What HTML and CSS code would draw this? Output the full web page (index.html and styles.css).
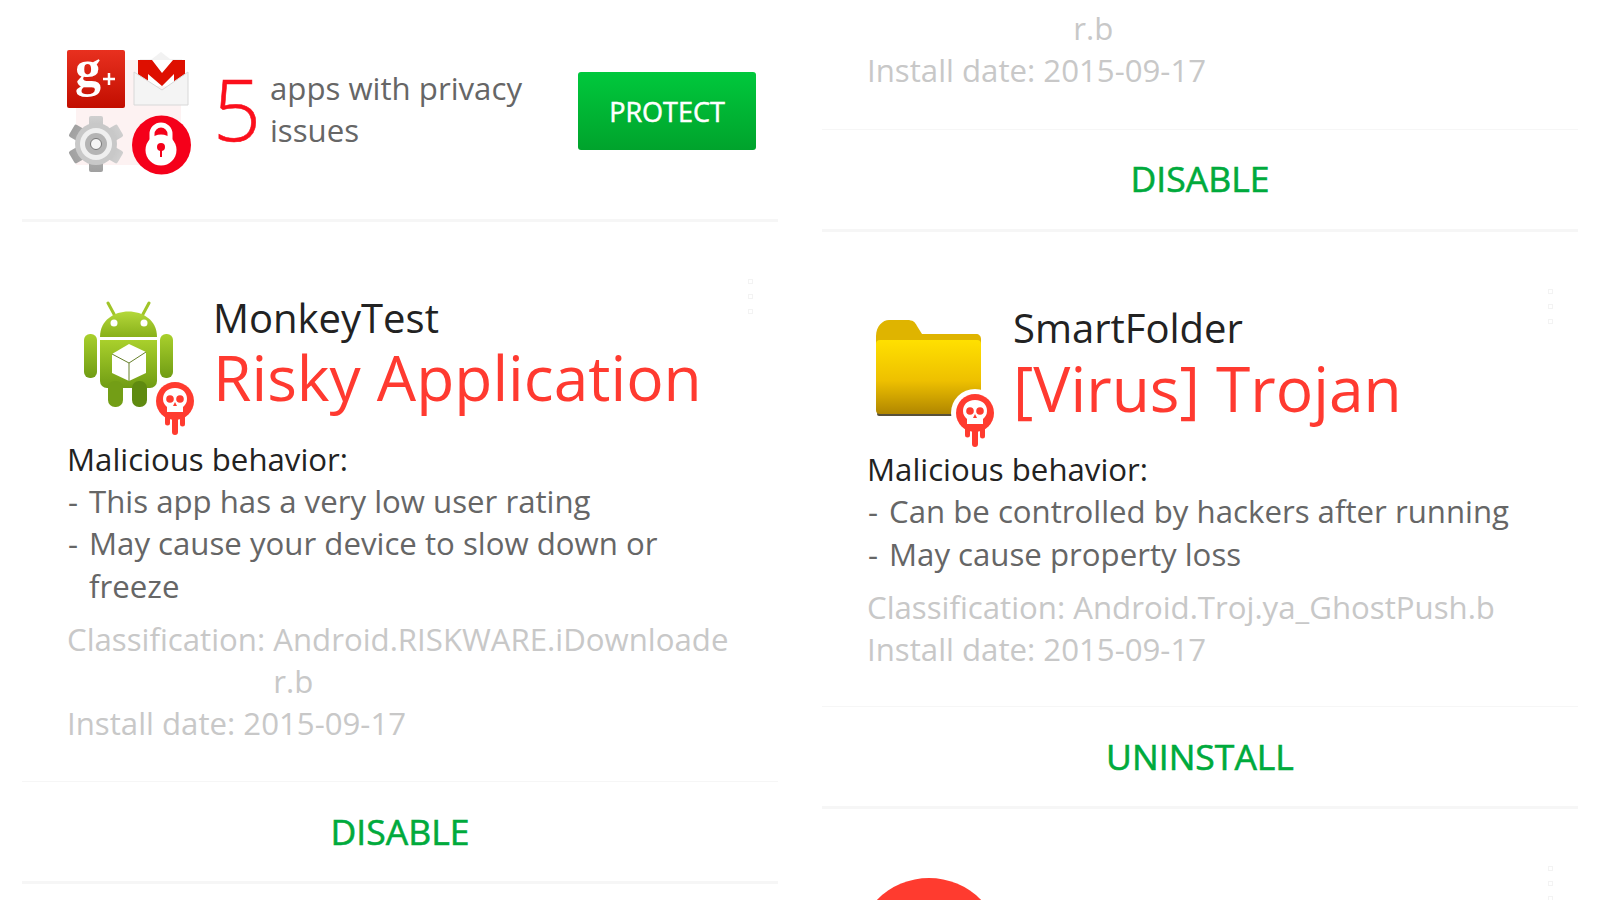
FILE: index.html
```html
<!DOCTYPE html>
<html lang="en">
<head>
<meta charset="utf-8">
<title>Privacy issues</title>
<link rel="stylesheet" href="styles.css">
</head>
<body>
<main class="page">
  <section class="col col-left">
    <header class="summary">
      <div class="app-grid">
        <svg class="mini" viewBox="0 0 58 58"><defs><linearGradient id="gp" x1="0" y1="0" x2="0" y2="1"><stop offset="0" stop-color="#e8301f"/><stop offset="1" stop-color="#c20e00"/></linearGradient></defs><rect width="58" height="58" rx="2" fill="url(#gp)"/><text x="8" y="36" class="gplus">g</text><path d="M42 23v12M36 29h12" stroke="#fff" stroke-width="2.500"/></svg>
        <svg class="mini" viewBox="0 0 58 58"><path d="M29 2 20 9H8v13h42V9H38z" fill="#f2f2f2"/><path d="M6 10h47v26H6z" fill="#fff"/><path d="M6 10h14l10 13 11-13h12v25h-11V24L30 36 16 24v11H6z" fill="#de0f00"/><path d="M2 22 30 40 56 22v33H2z" fill="#f4f4f4" stroke="#d8d8d8"/></svg>
        <svg class="mini" viewBox="0 0 58 58"><defs><linearGradient id="gr" x1="0" y1="0" x2="0" y2="1"><stop offset="0" stop-color="#cfcfcf"/><stop offset="1" stop-color="#a0a0a0"/></linearGradient></defs><g fill="url(#gr)"><rect x="22" y="1" width="14" height="56" rx="2"/><rect x="22" y="1" width="14" height="56" rx="2" transform="rotate(60 29 29)"/><rect x="22" y="1" width="14" height="56" rx="2" transform="rotate(120 29 29)"/></g><circle cx="29" cy="29" r="21" fill="#c8c8c8"/><circle cx="29" cy="29" r="16" fill="#efefef"/><circle cx="29" cy="29" r="11" fill="#b4b4b4"/><circle cx="29" cy="29" r="5.500" fill="#f4f4f4" stroke="#777" stroke-width="1"/></svg>
        <svg class="mini" viewBox="0 0 58 58"><circle cx="29.500" cy="30" r="29.500" fill="#f5001a"/><path d="M20 26v-7a9 9 0 0 1 18 0v7" fill="none" stroke="#fff" stroke-width="5"/><circle cx="29" cy="35" r="15.500" fill="#fff"/><circle cx="29" cy="32" r="4" fill="#f5001a"/><path d="M28 33h2v9h-2z" fill="#f5001a"/></svg>
      </div>
      <span class="count">5</span>
      <p class="summary-text">apps with privacy issues</p>
      <button class="protect">PROTECT</button>
    </header>
    <article class="card card-first">
      <div class="menu"><i></i><i></i><i></i></div>
      <div class="head">
        <div class="icon">
          <svg class="app" viewBox="0 0 92 108"><defs><linearGradient id="gd" x1="0" y1="0" x2="0" y2="1"><stop offset="0" stop-color="#a9d02c"/><stop offset="1" stop-color="#709c14"/></linearGradient><linearGradient id="gh" x1="0" y1="0" x2="0" y2="1"><stop offset="0" stop-color="#b4d83a"/><stop offset="1" stop-color="#88b01a"/></linearGradient></defs><path d="M26 2l7 13M67 2l-7 13" stroke="#a0c428" stroke-width="3" stroke-linecap="round"/><path d="M18 36C18 2 75 2 75 36z" fill="url(#gh)"/><circle cx="32" cy="22" r="3.500" fill="#fff"/><circle cx="62" cy="22" r="3.500" fill="#fff"/><path d="M18 39h57v41a7 7 0 0 1-7 7H25a7 7 0 0 1-7-7z" fill="url(#gd)"/><rect x="2" y="33" width="13" height="44" rx="6" fill="url(#gd)"/><rect x="78" y="33" width="13" height="44" rx="6" fill="url(#gd)"/><rect x="26" y="80" width="15" height="26" rx="7" fill="#739e16"/><rect x="50" y="80" width="15" height="26" rx="7" fill="#5f8a10"/><path d="M47 43 64 51v21l-17 8-17-8V53z" fill="#fff"/><path d="M30 53l17 9 17-11M47 62v18" fill="none" stroke="#66802a" stroke-width="1"/></svg>
          <svg class="skull" viewBox="0 0 40 54"><circle cx="20" cy="20" r="19" fill="#ff3b2f"/><path d="M10 30h5v12a2.500 2.500 0 0 1-5 0zM17 30h6v21a3 3 0 0 1-6 0zM25 30h5v13a2.500 2.500 0 0 1-5 0z" fill="#ff3b2f"/><path d="M20 7c-8 0-12 5-12 11 0 4 2 6 4 8v5h16v-5c2-2 4-4 4-8 0-6-4-11-12-11z" fill="#fff"/><circle cx="15" cy="18" r="3.800" fill="#ff3b2f"/><circle cx="25" cy="18" r="3.800" fill="#ff3b2f"/><path d="M20 21l2 4h-4z" fill="#ff3b2f"/></svg>
        </div>
        <div class="title">
          <h2 class="name">MonkeyTest</h2>
          <h3 class="risk">Risky Application</h3>
        </div>
      </div>
      <p class="subhead">Malicious behavior:</p>
      <ul class="reasons">
        <li>This app has a very low user rating</li>
        <li>May cause your device to slow down or freeze</li>
      </ul>
      <dl class="meta">
        <div class="meta-row"><dt>Classification:&nbsp;</dt><dd>Android.RISKWARE.iDownloade<br>r.b</dd></div>
        <div class="meta-row"><dt>Install date:&nbsp;</dt><dd>2015-09-17</dd></div>
      </dl>
      <div class="action">DISABLE</div>
    </article>
  </section>
  <section class="col col-right">
    <div class="carry">
      <dl class="meta meta-carry">
        <div class="meta-row"><dt class="ghost">Classification:&nbsp;</dt><dd>r.b</dd></div>
        <div class="meta-row"><dt>Install date:&nbsp;</dt><dd>2015-09-17</dd></div>
      </dl>
      <div class="action">DISABLE</div>
    </div>
    <article class="card card-second">
      <div class="menu"><i></i><i></i><i></i></div>
      <div class="head">
        <div class="icon">
          <svg class="app" viewBox="0 0 108 96"><defs><linearGradient id="fd" x1="0" y1="0" x2="0" y2="1"><stop offset="0" stop-color="#ffe000"/><stop offset=".55" stop-color="#eec000"/><stop offset="1" stop-color="#b08600"/></linearGradient></defs><path d="M1 90V16C1 6 8 0 14 0h18c6 0 8 2 10 6l5 8h54c3 0 5 2 5 5v71z" fill="#dfb400"/><rect x="2" y="92" width="104" height="4" rx="2" fill="#57503a"/><rect x="1" y="20" width="105" height="74" rx="4" fill="url(#fd)"/></svg>
          <svg class="skull ringed" viewBox="0 0 40 54"><circle cx="20" cy="20" r="24" fill="#fff"/><circle cx="20" cy="20" r="19" fill="#ff3b2f"/><path d="M10 30h5v12a2.500 2.500 0 0 1-5 0zM17 30h6v21a3 3 0 0 1-6 0zM25 30h5v13a2.500 2.500 0 0 1-5 0z" fill="#ff3b2f"/><path d="M20 7c-8 0-12 5-12 11 0 4 2 6 4 8v5h16v-5c2-2 4-4 4-8 0-6-4-11-12-11z" fill="#fff"/><circle cx="15" cy="18" r="3.800" fill="#ff3b2f"/><circle cx="25" cy="18" r="3.800" fill="#ff3b2f"/><path d="M20 21l2 4h-4z" fill="#ff3b2f"/></svg>
        </div>
        <div class="title">
          <h2 class="name">SmartFolder</h2>
          <h3 class="risk">[Virus] Trojan</h3>
        </div>
      </div>
      <p class="subhead">Malicious behavior:</p>
      <ul class="reasons">
        <li>Can be controlled by hackers after running</li>
        <li>May cause property loss</li>
      </ul>
      <dl class="meta">
        <div class="meta-row"><dt>Classification:&nbsp;</dt><dd>Android.Troj.ya_GhostPush.b</dd></div>
        <div class="meta-row"><dt>Install date:&nbsp;</dt><dd>2015-09-17</dd></div>
      </dl>
      <div class="action">UNINSTALL</div>
    </article>
    <article class="card card-third">
      <div class="menu"><i></i><i></i><i></i></div>
      <div class="red-disc"></div>
    </article>
  </section>
</main>
</body>
</html>
```

FILE: styles.css
```css
* { box-sizing: border-box; }
html, body { margin: 0; height: 100%; overflow: hidden; background: #fff; }
body { font-family: "Open Sans", "Noto Sans", sans-serif; color: #666; }
.page { display: grid; grid-template-columns: 756px 756px; column-gap: 44px; padding-left: 22px; width: 1600px; height: 900px; overflow: hidden; }
.col { min-width: 0; }

.summary { height: 222px; padding: 50px 22px 0 45px; display: flex; align-items: flex-start; border-bottom: 3px solid #f6f6f6; }
.app-grid { width: 126px; display: grid; grid-template-columns: 58px 58px; gap: 7px 7px; flex: none; background: linear-gradient(#fdf2f2, #fdf2f2) 9px 10px / 105px 105px no-repeat; }
.mini { width: 58px; height: 58px; display: block; overflow: visible; }
.gplus { font: bold 52px "Liberation Serif", serif; fill: #fff; }
.count { font-size: 84px; line-height: 106px; color: #fb0f1c; margin: 6px 0 0 20px; font-weight: 300; width: 57px; -webkit-text-stroke: 0.6px #fb0f1c; }
.summary-text { margin: 16.500px 0 0 0; width: 300px; font-size: 31.200px; line-height: 42.400px; color: #666; }
.protect { margin: 22px 0 0 auto; width: 178px; height: 78px; flex: none; border: 0; border-radius: 3px; background: linear-gradient(#00c83c, #00a32c); color: #fff; font: 400 27px "Open Sans", sans-serif; -webkit-text-stroke: 0.5px #fff; padding: 0; }

.card { position: relative; }
.card-first { padding-top: 69px; }
.card-second { padding-top: 69px; }
.menu { position: absolute; right: 25px; top: 57px; display: flex; flex-direction: column; gap: 10px; }
.menu i { width: 5px; height: 5px; border: 1px solid #f3f3f3; display: block; }
.head { display: flex; padding-left: 45px; height: 147px; }
.card-first .head { height: 146.500px; }
.icon { position: relative; width: 146px; flex: none; }
.app { position: absolute; left: 15px; top: 10px; width: 92px; height: 108px; }
.card-second .app { left: 8px; top: 19px; width: 108px; height: 96px; }
.skull { position: absolute; left: 88px; top: 90px; width: 40px; height: 54px; overflow: visible; }
.skull.ringed { top: 92px; }
.title { min-width: 0; }
.name { margin: 0; font-size: 40px; line-height: 54px; font-weight: 400; color: #222; }
.risk { margin: -3px 0 0; font-size: 62.250px; line-height: 70px; font-weight: 400; color: #ff3a30; white-space: nowrap; }
.card-second .risk { margin-top: -2px; }

.subhead { margin: 0; padding-left: 45px; font-size: 31.200px; line-height: 42.400px; color: #222; }
.reasons { list-style: none; margin: 0; padding: 0 50px 0 67px; font-size: 31.200px; line-height: 42.400px; color: #666; }
.reasons li { position: relative; }
.reasons li::before { content: "-"; position: absolute; left: -21px; }

.meta { margin: 10.500px 0 0; padding: 0 22px 0 45px; font-size: 31.200px; line-height: 42.400px; color: #c8c8c8; }
.meta-row { display: flex; }
.meta dt, .meta dd { margin: 0; white-space: nowrap; }
.meta-carry { margin: 0; padding-top: 7px; }
.card-second .meta { margin-top: 11px; }
.ghost { visibility: hidden; }

.action { margin-top: 36px; height: 103px; border-top: 1px solid #f6f6f6; border-bottom: 3px solid #f6f6f6; display: flex; align-items: center; justify-content: center; font-size: 35.500px; font-weight: 400; -webkit-text-stroke: 0.6px #00aa3c; color: #00aa3c; }
.carry .action { margin-top: 37px; padding-bottom: 2px; }
.card-second .action { margin-top: 35px; }
.red-disc { position: absolute; left: 34px; top: 69px; width: 146px; height: 146px; border-radius: 50%; background: #ff3b2f; }
.card-third { height: 200px; }
```
